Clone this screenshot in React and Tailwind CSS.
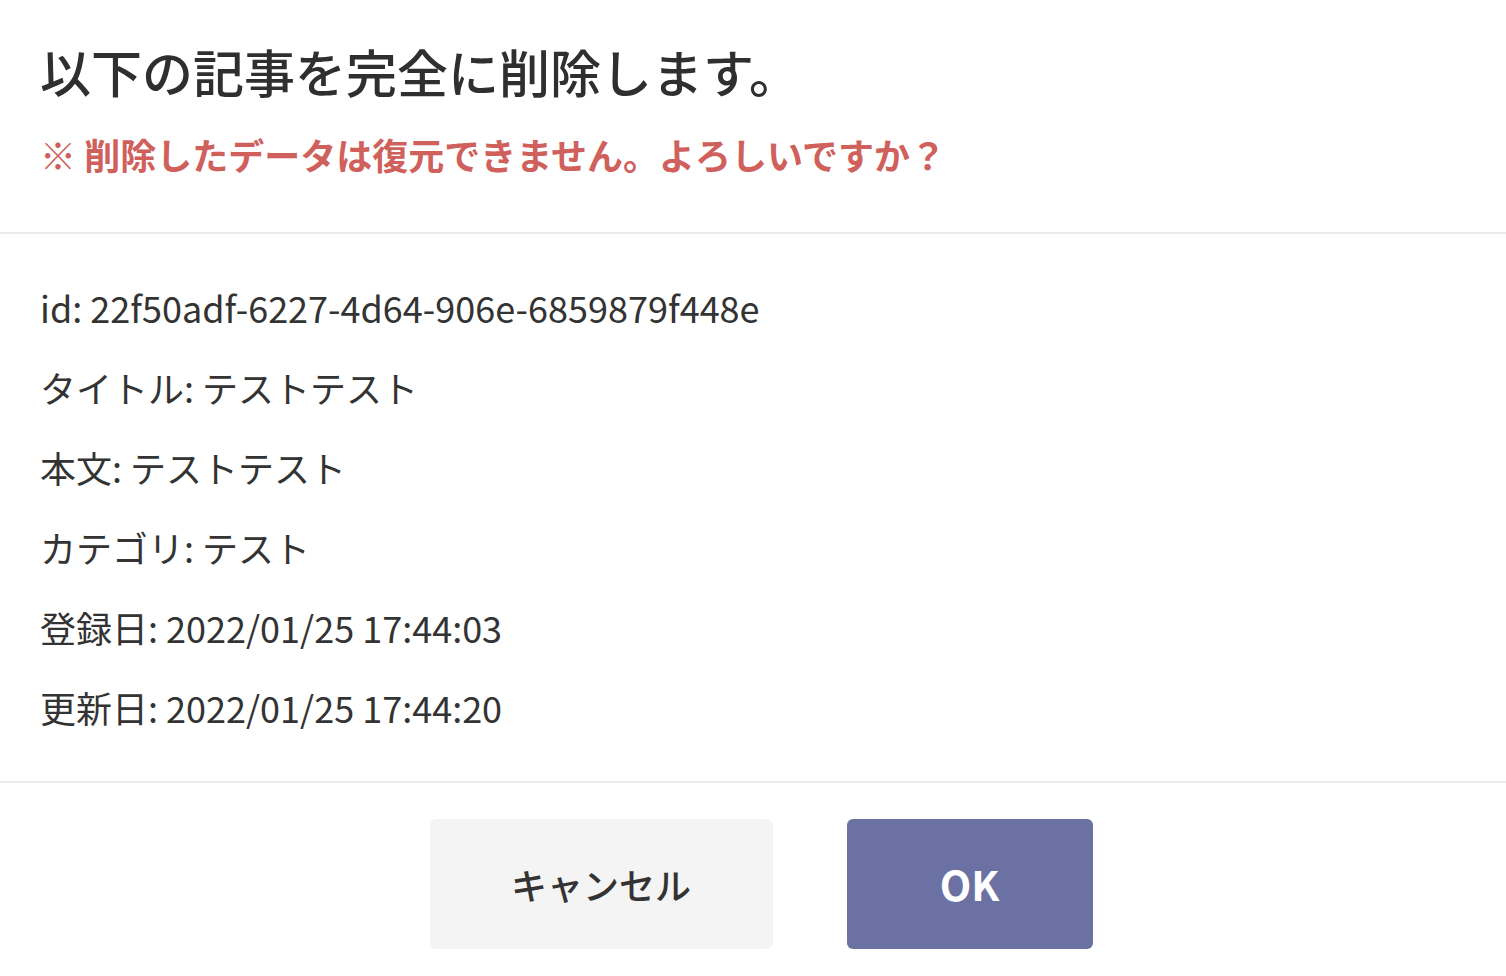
import React from 'react';

// dialogo de confirmacion para borrar un articulo
const FONT = { fontFamily: '"Noto Sans CJK JP", "Noto Sans", sans-serif' };

const detalle = [
  'id: 22f50adf-6227-4d64-906e-6859879f448e',
  'タイトル: テストテスト',
  '本文: テストテスト',
  'カテゴリ: テスト',
  '登録日: 2022/01/25 17:44:03',
  '更新日: 2022/01/25 17:44:20',
];

export default function App() {
  return (
    <div style={FONT} className="min-h-screen w-full bg-white text-[#333333]">
      {/* cabecera con titulo y aviso */}
      <div className="px-10 pt-[34px] pb-[52px] border-b-2 border-[#ebebeb]">
        <h1 className="text-[51px] leading-[75px] font-medium text-[#2f2f2f]">以下の記事を完全に削除します。</h1>
        <p className="mt-5 text-[36px] leading-[51px] font-bold text-[#d0605c]">※ 削除したデータは復元できません。よろしいですか？</p>
      </div>

      {/* datos del articulo */}
      <div className="px-10 pt-[50px] pb-[51px] border-b-2 border-[#ebebeb] flex flex-col gap-[34px]">
        {detalle.map((linea) => (
          <p key={linea} className="text-[36px] leading-[46px] text-[#333333]">{linea}</p>
        ))}
      </div>

      {/* botones */}
      <div className="pt-9 pl-4 flex justify-center gap-[74px]">
        <button className="w-[343px] h-[130px] rounded-md bg-[#f4f4f4] text-[36px] font-medium text-[#333333]">キャンセル</button>
        <button className="w-[246px] h-[130px] rounded-md bg-[#6b72a3] text-[41px] font-bold text-white">OK</button>
      </div>
    </div>
  );
}
